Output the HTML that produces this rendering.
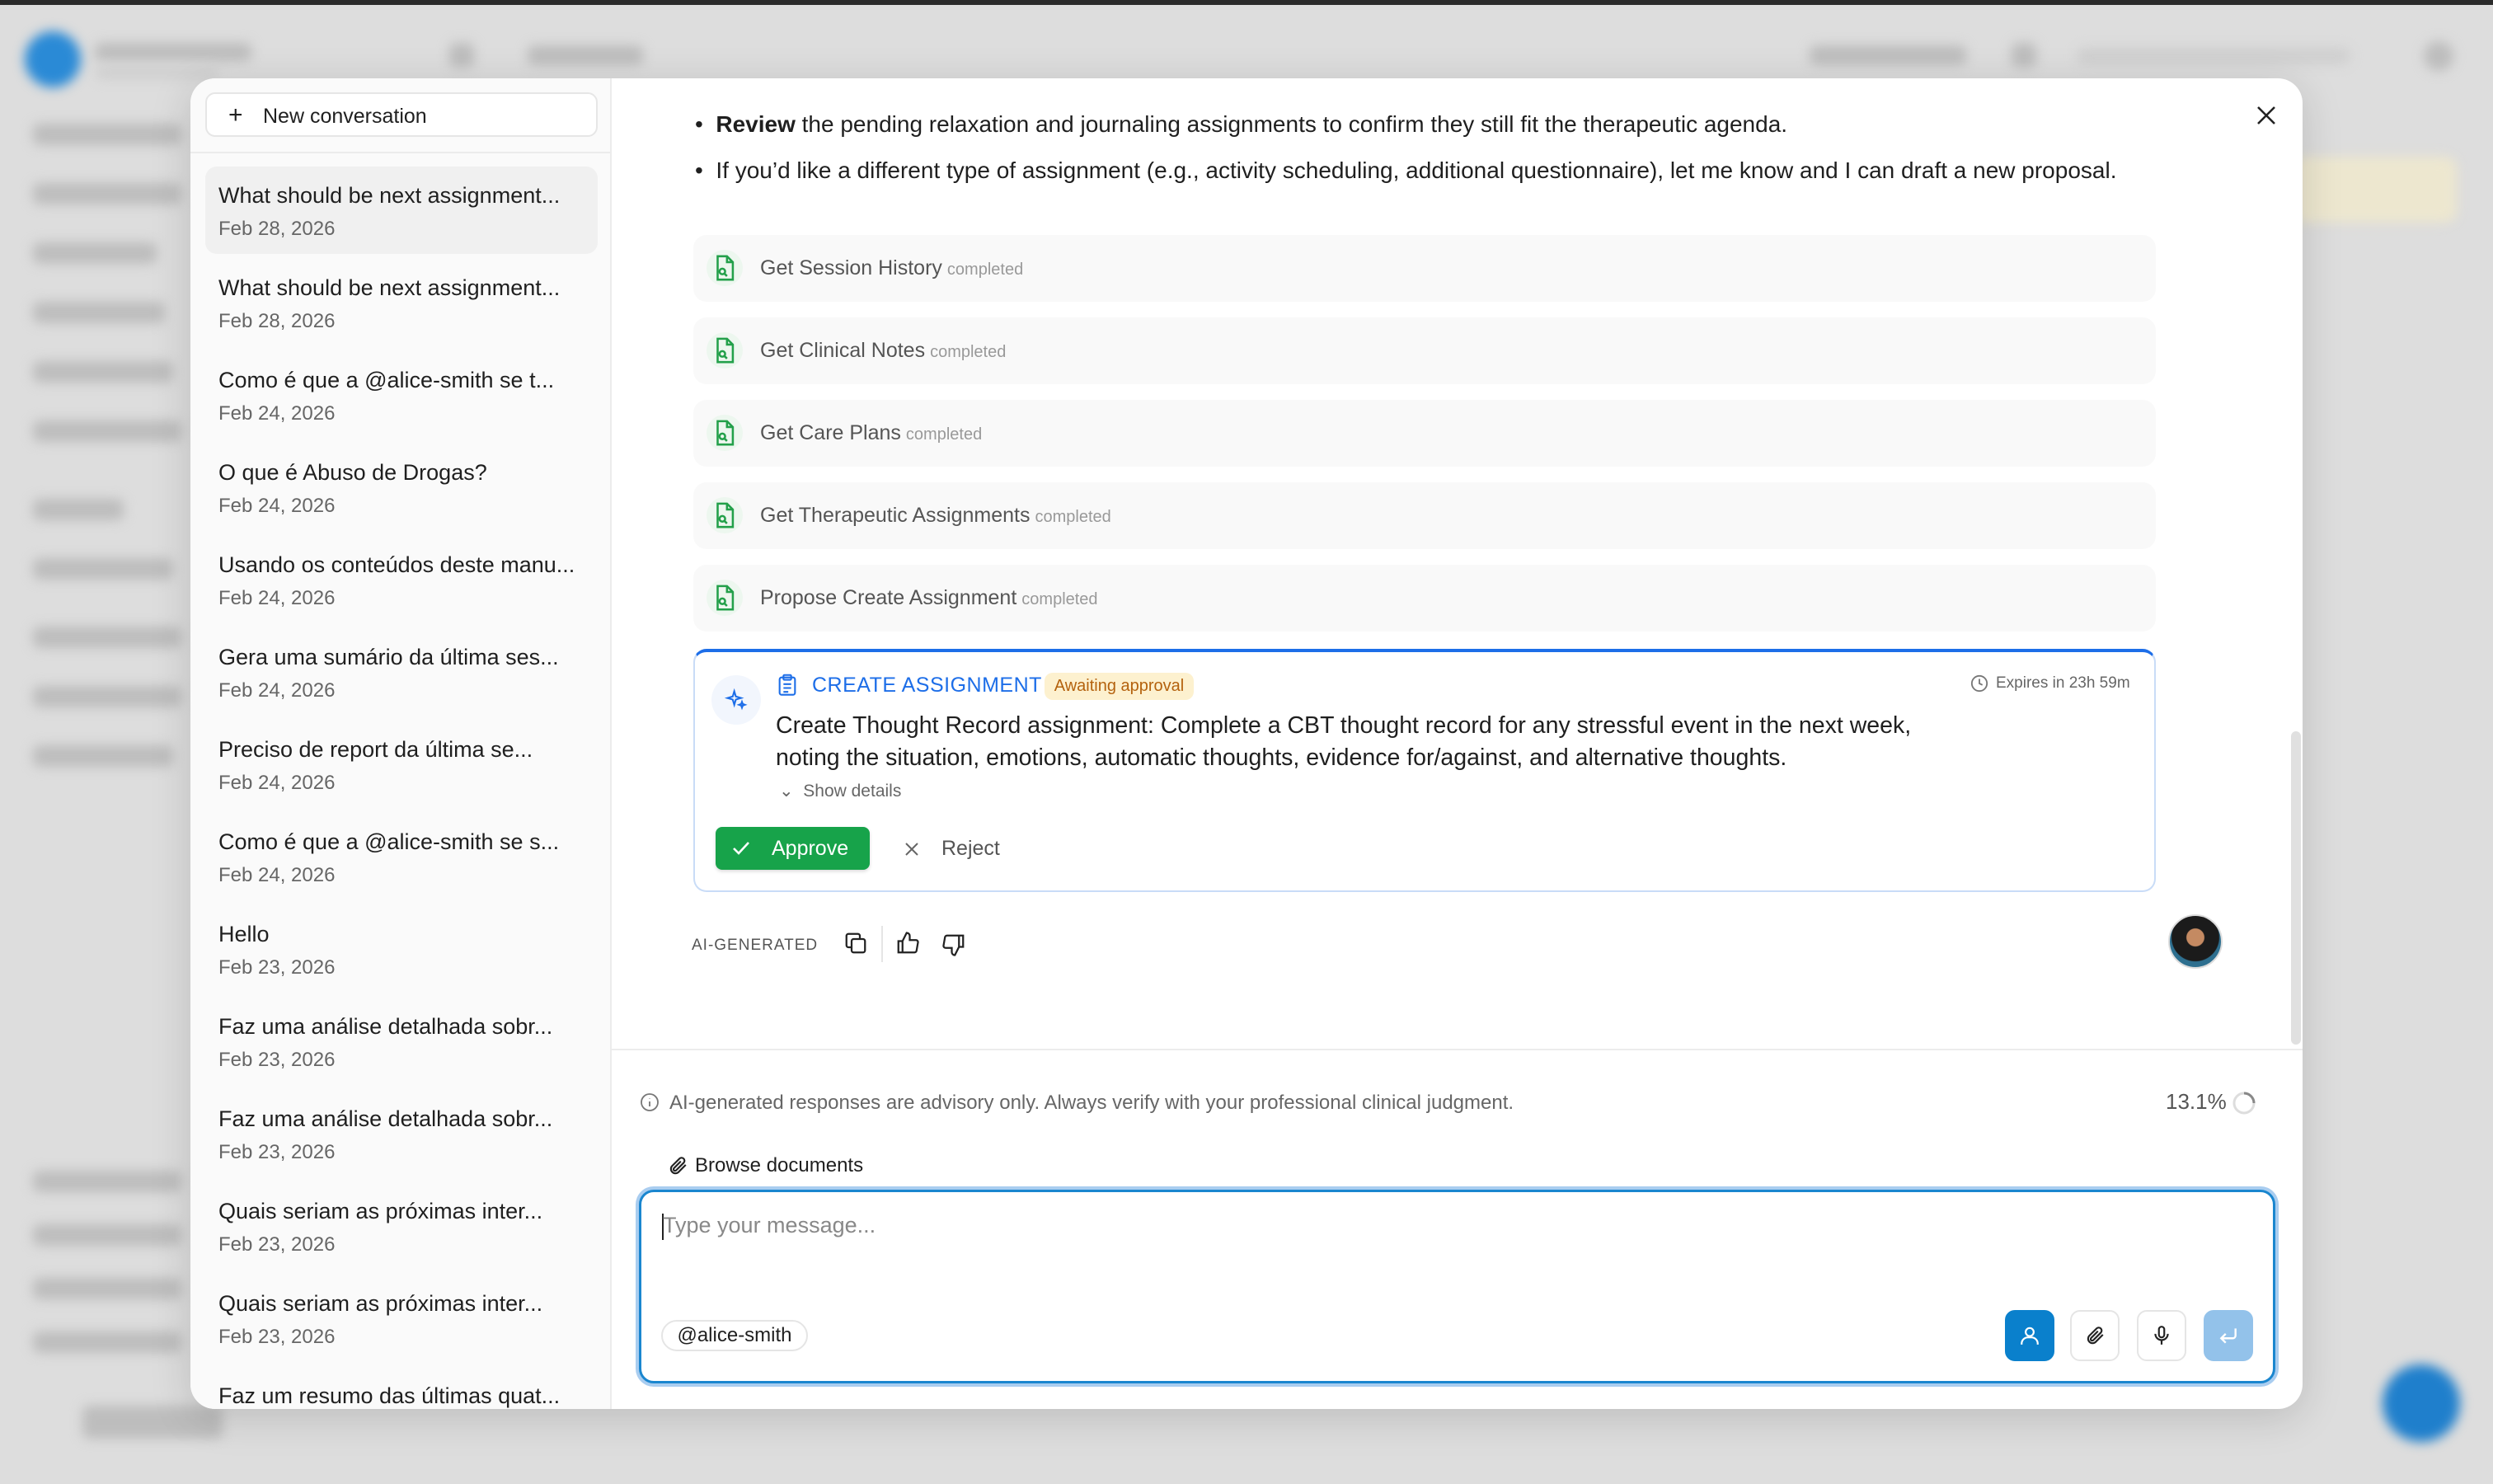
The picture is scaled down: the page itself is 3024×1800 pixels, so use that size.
<!DOCTYPE html>
<html><head><meta charset="utf-8"><style>
*{box-sizing:border-box;margin:0;padding:0}
body{width:3024px;height:1800px;position:relative;overflow:hidden;background:#dddddd;font-family:"Liberation Sans",sans-serif;color:#1f1f1f}
.a{position:absolute}
.bl{filter:blur(7px)}
.g{background:#bdbdbd;border-radius:8px}
.modal{left:231px;top:95px;width:2562px;height:1614px;background:#fff;border-radius:30px;overflow:hidden;box-shadow:0 10px 50px rgba(0,0,0,.15)}
.side{left:0;top:0;width:511px;height:1614px;background:#fafafa;border-right:2px solid #ececec}
.item{position:absolute;left:18px;width:476px;height:106px;border-radius:14px}
.item .t{position:absolute;left:16px;top:20px;font-size:27px;color:#1f1f1f;white-space:nowrap}
.item .d{position:absolute;left:16px;top:62px;font-size:24px;color:#666}
.tool{position:absolute;left:610px;width:1774px;height:81px;background:#f9f9f9;border-radius:16px}
.tool .ic{position:absolute;left:16px;top:18px;width:44px;height:44px;border-radius:50%;background:#edf7ef}
.tool .tx{position:absolute;left:81px;top:26px;font-size:25px;color:#555}
.tool .tx span{font-size:20px;color:#999;margin-left:6px}
.btn{position:absolute;top:1494px;width:60px;height:62px;border-radius:12px;border:2px solid #e5e5e5;background:#fff}
</style></head><body>
<div class="a" style="left:0;top:0;width:3024px;height:6px;background:#2a2a2a"></div>
<div class="a bl" style="left:30px;top:38px;width:68px;height:68px;border-radius:50%;background:#2a8ad6"></div>
<div class="a bl g" style="left:115px;top:52px;width:190px;height:22px"></div>
<div class="a bl g" style="left:115px;top:80px;width:150px;height:16px;background:#cfcfcf"></div>
<div class="a bl g" style="left:545px;top:52px;width:30px;height:30px"></div>
<div class="a bl g" style="left:640px;top:55px;width:140px;height:24px"></div>
<div class="a bl g" style="left:2195px;top:55px;width:190px;height:24px"></div>
<div class="a bl g" style="left:2440px;top:52px;width:30px;height:30px"></div>
<div class="a bl g" style="left:2520px;top:58px;width:330px;height:20px;background:#cfcfcf"></div>
<div class="a bl g" style="left:2940px;top:50px;width:36px;height:36px;border-radius:50%"></div>
<div class="a bl" style="left:2780px;top:190px;width:200px;height:80px;background:#ede7cf;border-radius:14px"></div>
<div class="a bl" style="left:2890px;top:1655px;width:94px;height:94px;border-radius:50%;background:#1f7fcc"></div>
<div class="a bl g" style="left:40px;top:150px;width:180px;height:26px"></div>
<div class="a bl g" style="left:40px;top:222px;width:180px;height:26px"></div>
<div class="a bl g" style="left:40px;top:294px;width:150px;height:26px"></div>
<div class="a bl g" style="left:40px;top:366px;width:160px;height:26px"></div>
<div class="a bl g" style="left:40px;top:438px;width:170px;height:26px"></div>
<div class="a bl g" style="left:40px;top:510px;width:180px;height:26px"></div>
<div class="a bl g" style="left:40px;top:605px;width:110px;height:26px"></div>
<div class="a bl g" style="left:40px;top:677px;width:170px;height:26px"></div>
<div class="a bl g" style="left:40px;top:760px;width:180px;height:26px"></div>
<div class="a bl g" style="left:40px;top:832px;width:180px;height:26px"></div>
<div class="a bl g" style="left:40px;top:904px;width:170px;height:26px"></div>
<div class="a bl g" style="left:40px;top:1420px;width:180px;height:26px"></div>
<div class="a bl g" style="left:40px;top:1485px;width:180px;height:26px"></div>
<div class="a bl g" style="left:40px;top:1550px;width:180px;height:26px"></div>
<div class="a bl g" style="left:40px;top:1615px;width:180px;height:26px"></div>
<div class="a bl g" style="left:100px;top:1705px;width:170px;height:40px"></div>

<div class="a modal">
 <div class="a side">
  <div class="a" style="left:18px;top:17px;width:476px;height:54px;border:2px solid #e6e6e6;border-radius:12px;background:#fff">
   <div class="a" style="left:26px;top:14px;font-size:30px;line-height:24px;color:#222">+</div>
   <div class="a" style="left:68px;top:13px;font-size:25px;color:#1f1f1f">New conversation</div>
  </div>
  <div class="a" style="left:0;top:89px;width:511px;height:2px;background:#ececec"></div>
  <div class="item" style="top:107px;background:#f0f0f0"><div class="t">What should be next assignment...</div><div class="d">Feb 28, 2026</div></div>
  <div class="item" style="top:219px"><div class="t">What should be next assignment...</div><div class="d">Feb 28, 2026</div></div>
  <div class="item" style="top:331px"><div class="t">Como é que a @alice-smith se t...</div><div class="d">Feb 24, 2026</div></div>
  <div class="item" style="top:443px"><div class="t">O que é Abuso de Drogas?</div><div class="d">Feb 24, 2026</div></div>
  <div class="item" style="top:555px"><div class="t">Usando os conteúdos deste manu...</div><div class="d">Feb 24, 2026</div></div>
  <div class="item" style="top:667px"><div class="t">Gera uma sumário da última ses...</div><div class="d">Feb 24, 2026</div></div>
  <div class="item" style="top:779px"><div class="t">Preciso de report da última se...</div><div class="d">Feb 24, 2026</div></div>
  <div class="item" style="top:891px"><div class="t">Como é que a @alice-smith se s...</div><div class="d">Feb 24, 2026</div></div>
  <div class="item" style="top:1003px"><div class="t">Hello</div><div class="d">Feb 23, 2026</div></div>
  <div class="item" style="top:1115px"><div class="t">Faz uma análise detalhada sobr...</div><div class="d">Feb 23, 2026</div></div>
  <div class="item" style="top:1227px"><div class="t">Faz uma análise detalhada sobr...</div><div class="d">Feb 23, 2026</div></div>
  <div class="item" style="top:1339px"><div class="t">Quais seriam as próximas inter...</div><div class="d">Feb 23, 2026</div></div>
  <div class="item" style="top:1451px"><div class="t">Quais seriam as próximas inter...</div><div class="d">Feb 23, 2026</div></div>
  <div class="item" style="top:1563px"><div class="t">Faz um resumo das últimas quat...</div></div>
 </div>
 <svg class="a" style="left:2505px;top:32px" width="26" height="26" viewBox="0 0 26 26"><path d="M3 3L23 23M23 3L3 23" stroke="#222" stroke-width="2.6"/></svg>
 <div class="a" style="left:612px;top:40px;font-size:28px;color:#1f1f1f;white-space:nowrap">•&nbsp;&nbsp;<b>Review</b> the pending relaxation and journaling assignments to confirm they still fit the therapeutic agenda.</div>
 <div class="a" style="left:612px;top:96px;font-size:28px;color:#1f1f1f;white-space:nowrap">•&nbsp;&nbsp;If you’d like a different type of assignment (e.g., activity scheduling, additional questionnaire), let me know and I can draft a new proposal.</div>
 <div class="tool" style="top:190px"><div class="ic"></div><div class="tx">Get Session History<span>completed</span></div></div>
 <div class="tool" style="top:290px"><div class="ic"></div><div class="tx">Get Clinical Notes<span>completed</span></div></div>
 <div class="tool" style="top:390px"><div class="ic"></div><div class="tx">Get Care Plans<span>completed</span></div></div>
 <div class="tool" style="top:490px"><div class="ic"></div><div class="tx">Get Therapeutic Assignments<span>completed</span></div></div>
 <div class="tool" style="top:590px"><div class="ic"></div><div class="tx">Propose Create Assignment<span>completed</span></div></div>
 <svg class="a" style="left:631px;top:213px" width="34" height="440" viewBox="0 0 24 310.6" fill="none" stroke="#23a04a" stroke-width="1.8">
  <g id="fi"><path d="M6 2h8l5 5v15H6z M14 2v5h5"/><circle cx="10" cy="15" r="2.4"/><path d="M11.8 16.8l2.2 2.2"/></g>
  <use href="#fi" y="70.6"/><use href="#fi" y="141.2"/><use href="#fi" y="211.8"/><use href="#fi" y="282.4"/>
 </svg>
 <div class="a" style="left:610px;top:692px;width:1774px;height:295px;border:2px solid #c9dcf7;border-top:4px solid #1d6ee8;border-radius:16px;background:#fff"></div>
 <div class="a" style="left:632px;top:724px;width:60px;height:60px;border-radius:50%;background:#f2f6fd"></div>
 <svg class="a" style="left:648px;top:740px" width="28" height="28" viewBox="0 0 24 24" fill="none" stroke="#1d6ee8" stroke-width="1.8"><path d="M10 3l1.6 5.4L17 10l-5.4 1.6L10 17l-1.6-5.4L3 10l5.4-1.6z"/><path d="M18 14l.8 2.2L21 17l-2.2.8L18 20l-.8-2.2L15 17l2.2-.8z"/></svg>
 <svg class="a" style="left:712px;top:722px" width="24" height="28" viewBox="0 0 20 24" fill="none" stroke="#1d6ee8" stroke-width="1.8"><rect x="2" y="4" width="16" height="18" rx="2"/><rect x="6" y="1.5" width="8" height="5" rx="1"/><path d="M6 11h8M6 15h8M6 19h5"/></svg>
 <div class="a" style="left:754px;top:722px;font-size:25px;color:#1d6ee8;letter-spacing:.5px">CREATE ASSIGNMENT</div>
 <div class="a" style="left:1036px;top:721px;width:181px;height:33px;background:#fdf1cf;border-radius:10px;font-size:20px;color:#b4620e;text-align:center;line-height:33px">Awaiting approval</div>
 <svg class="a" style="left:2159px;top:723px" width="22" height="22" viewBox="0 0 24 24" fill="none" stroke="#777" stroke-width="2"><circle cx="12" cy="12" r="10"/><path d="M12 6v6l4 2"/></svg>
 <div class="a" style="left:2190px;top:723px;font-size:19px;color:#666">Expires in 23h 59m</div>
 <div class="a" style="left:710px;top:766px;font-size:28.5px;line-height:39px;color:#1f1f1f;width:1400px">Create Thought Record assignment: Complete a CBT thought record for any stressful event in the next week,<br>noting the situation, emotions, automatic thoughts, evidence for/against, and alternative thoughts.</div>
 <div class="a" style="left:714px;top:852px;font-size:21px;color:#666">⌄&nbsp; Show details</div>
 <div class="a" style="left:637px;top:908px;width:187px;height:52px;background:#17a34a;border-radius:8px;box-shadow:0 2px 4px rgba(0,0,0,.15);color:#fff;font-size:25px;line-height:52px;padding-left:68px">Approve</div>
 <svg class="a" style="left:657px;top:924px" width="22" height="20" viewBox="0 0 22 20" fill="none" stroke="#fff" stroke-width="2.6"><path d="M2 10l6 6L20 3"/></svg>
 <svg class="a" style="left:866px;top:926px" width="18" height="18" viewBox="0 0 18 18" stroke="#666" stroke-width="2"><path d="M2 2l14 14M16 2L2 16"/></svg>
 <div class="a" style="left:911px;top:920px;font-size:25px;color:#555">Reject</div>
 <div class="a" style="left:608px;top:1041px;font-size:19px;color:#555;letter-spacing:1px">AI-GENERATED</div>
 <svg class="a" style="left:792px;top:1034px" width="30" height="30" viewBox="0 0 24 24" fill="none" stroke="#222" stroke-width="1.8"><rect x="8" y="8" width="13" height="13" rx="2"/><path d="M16 8V5a2 2 0 0 0-2-2H5a2 2 0 0 0-2 2v9a2 2 0 0 0 2 2h3"/></svg>
 <div class="a" style="left:838px;top:1028px;width:2px;height:44px;background:#e5e5e5"></div>
 <svg class="a" style="left:855px;top:1034px" width="30" height="30" viewBox="0 0 24 24" fill="none" stroke="#222" stroke-width="1.8"><path d="M7 10v11H3V10zM7 10l4-8a3 3 0 0 1 3 3v4h6a2 2 0 0 1 2 2.3l-1.4 8A2 2 0 0 1 18.6 21H7"/></svg>
 <svg class="a" style="left:911px;top:1036px" width="30" height="30" viewBox="0 0 24 24" fill="none" stroke="#222" stroke-width="1.8"><path d="M17 14V3h4v11zM17 14l-4 8a3 3 0 0 1-3-3v-4H4a2 2 0 0 1-2-2.3l1.4-8A2 2 0 0 1 5.4 3H17"/></svg>
 <div class="a" style="left:2399px;top:1014px;width:66px;height:66px;border-radius:50%;background:radial-gradient(circle at 50% 42%,#c48a62 0 22%,#1b1b1b 24% 60%,#2e6f8f 62%);border:2px solid #ddd"></div>
 <div class="a" style="left:2548px;top:792px;width:12px;height:380px;background:#e0e0e0;border-radius:6px"></div>
 <div class="a" style="left:511px;top:1177px;width:2051px;height:2px;background:#ececec"></div>
 <svg class="a" style="left:545px;top:1230px" width="24" height="24" viewBox="0 0 24 24" fill="none" stroke="#777" stroke-width="1.8"><circle cx="12" cy="12" r="10"/><path d="M12 11v6M12 7v.5"/></svg>
 <div class="a" style="left:581px;top:1229px;font-size:24px;color:#666">AI-generated responses are advisory only. Always verify with your professional clinical judgment.</div>
 <div class="a" style="left:2396px;top:1226px;font-size:26px;color:#555">13.1%</div>
 <svg class="a" style="left:2476px;top:1228px" width="30" height="30" viewBox="0 0 30 30" fill="none"><circle cx="15" cy="15" r="12" stroke="#ddd" stroke-width="3"/><path d="M15 3a12 12 0 0 1 12 12" stroke="#888" stroke-width="3"/></svg>
 <svg class="a" style="left:578px;top:1305px" width="26" height="28" viewBox="0 0 24 24" fill="none" stroke="#222" stroke-width="2"><path d="M21 11l-8.5 8.5a5 5 0 0 1-7-7L14 4a3.3 3.3 0 0 1 4.7 4.7l-8.5 8.5a1.7 1.7 0 0 1-2.4-2.4L15.5 7"/></svg>
 <div class="a" style="left:612px;top:1305px;font-size:24px;color:#1f1f1f">Browse documents</div>
 <div class="a" style="left:544px;top:1348px;width:1985px;height:235px;border:3px solid #1a86cf;border-radius:18px;box-shadow:0 0 0 4px #a9cdf0;background:#fff"></div>
 <div class="a" style="left:572px;top:1377px;width:2px;height:32px;background:#222"></div>
 <div class="a" style="left:573px;top:1376px;font-size:27px;color:#888">Type your message...</div>
 <div class="a" style="left:571px;top:1506px;width:178px;height:38px;border:2px solid #e5e5e5;border-radius:19px;font-size:24px;line-height:34px;text-align:center;color:#1f1f1f">@alice-smith</div>
 <div class="btn" style="left:2201px;background:#0a80cc;border-color:#0a80cc"></div>
 <svg class="a" style="left:2218px;top:1512px" width="26" height="26" viewBox="0 0 24 24" fill="none" stroke="#fff" stroke-width="2"><circle cx="12" cy="8" r="4.5"/><path d="M3 22v-1a7 7 0 0 1 7-7h4a7 7 0 0 1 7 7v1"/></svg>
 <div class="btn" style="left:2280px"></div>
 <svg class="a" style="left:2297px;top:1512px" width="26" height="26" viewBox="0 0 24 24" fill="none" stroke="#222" stroke-width="2"><path d="M21 11l-8.5 8.5a5 5 0 0 1-7-7L14 4a3.3 3.3 0 0 1 4.7 4.7l-8.5 8.5a1.7 1.7 0 0 1-2.4-2.4L15.5 7"/></svg>
 <div class="btn" style="left:2361px"></div>
 <svg class="a" style="left:2378px;top:1512px" width="26" height="26" viewBox="0 0 24 24" fill="none" stroke="#222" stroke-width="2"><rect x="9" y="2" width="6" height="12" rx="3"/><path d="M5 10a7 7 0 0 0 14 0M12 17v5"/></svg>
 <div class="btn" style="left:2442px;background:#93c2ea;border-color:#93c2ea"></div>
 <svg class="a" style="left:2459px;top:1512px" width="26" height="26" viewBox="0 0 24 24" fill="none" stroke="#fff" stroke-width="2.2"><path d="M20 4v8a3 3 0 0 1-3 3H4M9 10l-5 5 5 5"/></svg>
</div>
</body></html>
